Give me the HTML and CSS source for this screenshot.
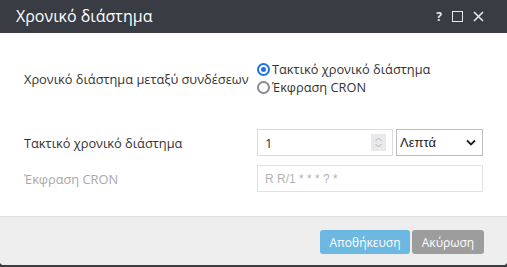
FILE: index.html
```html
<!DOCTYPE html>
<html lang="el">
<head>
  <meta charset="UTF-8">
  <title>Χρονικό διάστημα</title>
  <link rel="stylesheet" href="styles.css">
</head>
<body>
  <div class="dialog">
    <div class="dialog-header">
      <span class="dialog-title">Χρονικό διάστημα</span>
      <div class="header-tools">
        <span class="tool-help">?</span>
        <span class="tool-max"></span>
        <svg class="tool-close" width="11" height="11" viewBox="0 0 11 11">
          <path d="M1 1 L10 10 M10 1 L1 10" stroke="#e8e8e8" stroke-width="1.6"/>
        </svg>
      </div>
    </div>

    <div class="dialog-body">
      <div class="form-row row-mode">
        <label class="field-label">Χρονικό διάστημα μεταξύ συνδέσεων</label>
        <div class="radio-group">
          <label class="radio"><span class="radio-dot checked"></span>Τακτικό χρονικό διάστημα</label>
          <label class="radio"><span class="radio-dot"></span>Έκφραση CRON</label>
        </div>
      </div>

      <div class="form-row row-interval">
        <label class="field-label">Τακτικό χρονικό διάστημα</label>
        <div class="field-controls">
          <div class="number-input">
            <span class="number-value">1</span>
            <span class="spinner">
              <svg width="9" height="13" viewBox="0 0 9 13">
                <path d="M1.5 5 L4.5 2 L7.5 5 M1.5 8 L4.5 11 L7.5 8" fill="none" stroke="#b5b5b5" stroke-width="1"/>
              </svg>
            </span>
          </div>
          <div class="select">
            <span>Λεπτά</span>
            <svg width="10" height="7" viewBox="0 0 10 7">
              <path d="M1 1.5 L5 5.5 L9 1.5" fill="none" stroke="#222" stroke-width="1.8"/>
            </svg>
          </div>
        </div>
      </div>

      <div class="form-row row-cron">
        <label class="field-label disabled">Έκφραση CRON</label>
        <div class="text-input disabled">R R/1 * * * ? *</div>
      </div>
    </div>

    <div class="dialog-footer">
      <button class="btn btn-save">Αποθήκευση</button>
      <button class="btn btn-cancel">Ακύρωση</button>
    </div>
  </div>
</body>
</html>
```

FILE: styles.css
```css
body {
  margin: 0;
  background: #3a3c42;
  font-family: "Open Sans", "Noto Sans", sans-serif;
  color: #333;
}
.dialog {
  width: 507px;
  height: 265px;
  background: #ffffff;
  border-radius: 0 0 4px 4px;
  overflow: hidden;
  display: flex;
  flex-direction: column;
}
.dialog-header {
  height: 33px;
  background: #393c43;
  display: flex;
  align-items: center;
  justify-content: space-between;
  padding: 0 23px 0 16px;
  color: #fff;
}
.dialog-title {
  font-size: 16px;
  margin-top: -1px;
}
.header-tools {
  display: flex;
  align-items: center;
  gap: 10px;
}
.tool-help {
  font-size: 12px;
  font-weight: bold;
  color: #e8e8e8;
}
.tool-max {
  width: 9px;
  height: 9px;
  border: 1px solid #e8e8e8;
}
.dialog-body {
  flex: 1;
  padding: 29px 24px 0 24px;
  border-bottom: 1px solid #dedede;
}
.form-row {
  display: flex;
  align-items: center;
}
.field-label {
  width: 233px;
  flex-shrink: 0;
  font-size: 12.8px;
  color: #333;
}
.field-label.disabled {
  color: #a8a8a8;
}
.radio-group {
  display: flex;
  flex-direction: column;
  gap: 3px;
}
.radio {
  display: flex;
  align-items: center;
  font-size: 12.8px;
  color: #333;
  line-height: 15px;
}
.radio-dot {
  width: 9px;
  height: 9px;
  border: 2px solid #8a8a90;
  border-radius: 50%;
  margin-right: 2px;
  display: inline-flex;
  align-items: center;
  justify-content: center;
}
.radio-dot.checked {
  border-color: #1a73e8;
}
.radio-dot.checked::after {
  content: "";
  width: 5px;
  height: 5px;
  border-radius: 50%;
  background: #1a73e8;
}
.row-interval {
  margin-top: 34px;
}
.row-cron {
  margin-top: 9px;
}
.field-controls {
  display: flex;
  gap: 3px;
}
.number-input, .select, .text-input {
  height: 25px;
  border: 1px solid #dadada;
  box-sizing: content-box;
  display: flex;
  align-items: center;
  font-size: 13px;
}
.number-input {
  width: 121px;
  padding: 0 6px 0 7px;
  justify-content: space-between;
}
.number-value {
  color: #333;
}
.spinner {
  width: 15px;
  height: 17px;
  background: #e9e9ec;
  display: flex;
  align-items: center;
  justify-content: center;
}
.select {
  width: 76px;
  padding: 0 6px 0 3px;
  justify-content: space-between;
  border-color: #bdbdbd;
  font-family: "Liberation Sans", Arial, sans-serif;
  color: #222;
}
.text-input {
  width: 217px;
  padding: 0 0 0 7px;
  font-family: "Liberation Sans", Arial, sans-serif;
  font-size: 12px;
}
.text-input.disabled {
  color: #b3b3b3;
  border-color: #e2e2e2;
}
.dialog-footer {
  height: 48px;
  background: #eeeeee;
  display: flex;
  justify-content: flex-end;
  align-items: flex-start;
  padding: 13px 23px 0 0;
  box-sizing: border-box;
  gap: 2px;
}
button {
  font-family: "Open Sans", "Noto Sans", sans-serif;
  cursor: pointer;
}
.btn {
  height: 24px;
  border: none;
  border-radius: 3px;
  color: #fff;
  font-size: 12px;
  padding: 0 8px;
}
.btn-save {
  background: #6cb8e0;
  width: 90px;
}
.btn-cancel {
  background: #9d9d9d;
  width: 72px;
}
```
